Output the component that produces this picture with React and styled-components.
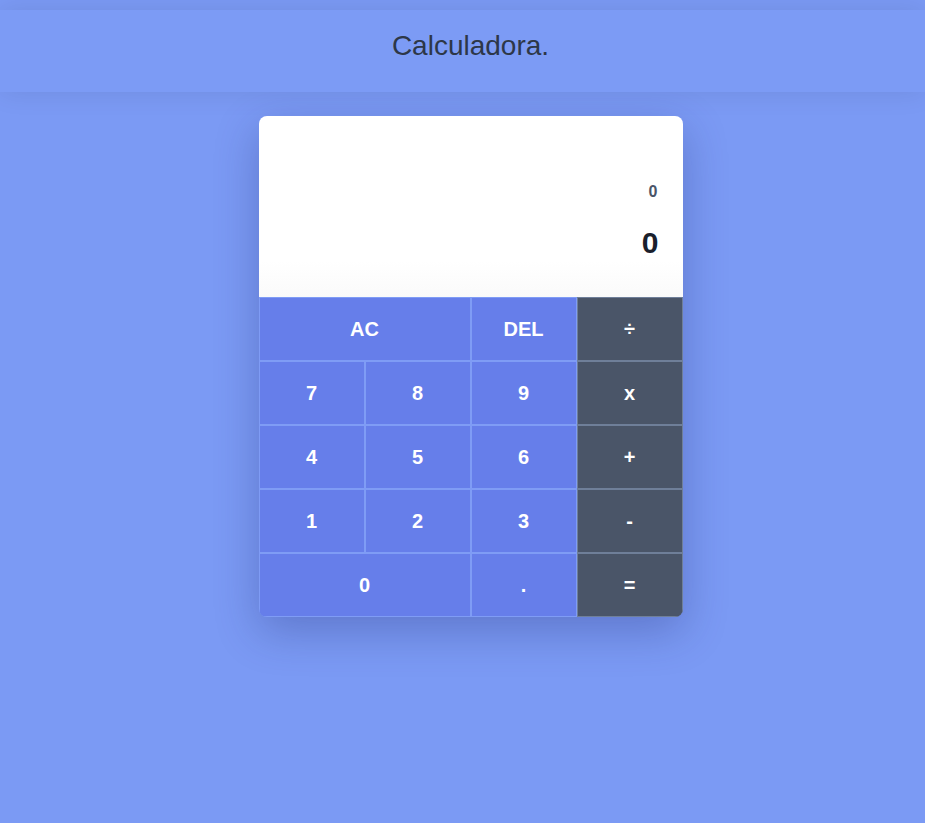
import React from "react";
import styled, { createGlobalStyle } from "styled-components";

const Global = createGlobalStyle`
  html, body { margin: 0; padding: 0; }
  body {
    background: #7b9af4;
    font-family: "Liberation Sans", Arial, sans-serif;
    min-height: 100vh;
  }
`;

const Page = styled.div`
  padding-top: 10px;
  min-height: 100vh;
  box-sizing: border-box;
  background: #7b9af4;
`;

const Header = styled.header`
  height: 82px;
  box-sizing: border-box;
  padding: 0 0 10px 16px;
  background: #7c9bf5;
  display: flex;
  align-items: center;
  justify-content: center;
  box-shadow: 0 0 28px rgba(0, 0, 0, 0.09);
  position: relative;
  z-index: 1;
`;

const Title = styled.h1`
  margin: 0;
  font-weight: 400;
  font-size: 28px;
  color: #2d3748;
`;

const Main = styled.main`
  padding: 24px 0 0 16px;
  display: flex;
  justify-content: center;
`;

const Card = styled.div`
  width: 424px;
  border-radius: 8px;
  overflow: hidden;
  box-shadow: 0 14px 44px rgba(30, 40, 110, 0.3);
`;

const Display = styled.div`
  height: 181px;
  box-sizing: border-box;
  background: linear-gradient(to bottom, #ffffff 80%, #fafafa 100%);
  display: flex;
  flex-direction: column;
  justify-content: flex-end;
  align-items: flex-end;
  padding: 0 24px 36px;
`;

const Previous = styled.div`
  font-size: 16px;
  line-height: 18px;
  font-weight: 700;
  color: #4a5568;
  margin-bottom: 24px;
  margin-right: 1px;
`;

const Current = styled.div`
  font-size: 30px;
  line-height: 36px;
  font-weight: 700;
  color: #1a202c;
`;

const Keys = styled.div`
  display: grid;
  grid-template-columns: repeat(4, 106px);
  grid-auto-rows: 64px;
`;

const Key = styled.button`
  grid-column: span ${(p) => p.$span || 1};
  margin: 0;
  border: 1px solid ${(p) => (p.$dark ? "#6f7f99" : "#7f9cf5")};
  background: ${(p) => (p.$dark ? "#4a5568" : "#667eea")};
  color: #fff;
  font-family: "Liberation Sans", Arial, sans-serif;
  font-weight: 700;
  font-size: 20px;
  cursor: pointer;
  padding: 0;
`;

const rows = [
  [["AC", 2], ["DEL"], ["÷", 1, true]],
  [["7"], ["8"], ["9"], ["x", 1, true]],
  [["4"], ["5"], ["6"], ["+", 1, true]],
  [["1"], ["2"], ["3"], ["-", 1, true]],
  [["0", 2], ["."], ["=", 1, true]],
];

export default function App() {
  return (
    <>
      <Global />
      <Page>
        <Header>
          <Title>Calculadora.</Title>
        </Header>
        <Main>
          <Card>
            <Display>
              <Previous>0</Previous>
              <Current>0</Current>
            </Display>
            <Keys>
              {rows.flat().map(([label, span, dark], i) => (
                <Key key={i} $span={span} $dark={dark}>
                  {label}
                </Key>
              ))}
            </Keys>
          </Card>
        </Main>
      </Page>
    </>
  );
}
